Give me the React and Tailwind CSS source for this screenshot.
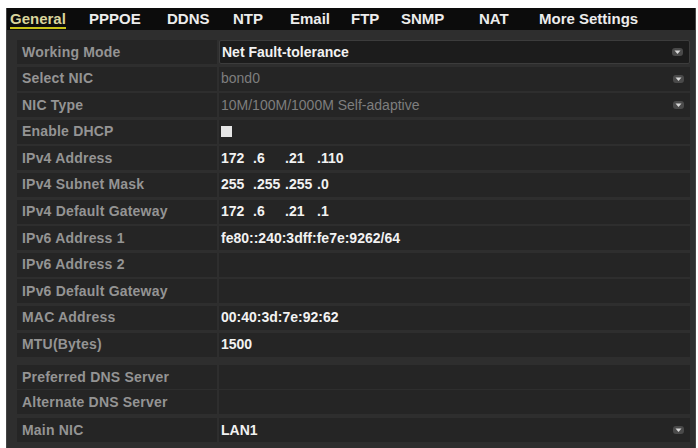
import React from 'react';

const tabs = [
  { name: 'General', w: 'w-[79px]', active: true },
  { name: 'PPPOE', w: 'w-[78px]' },
  { name: 'DDNS', w: 'w-[66px]' },
  { name: 'NTP', w: 'w-[57px]' },
  { name: 'Email', w: 'w-[61px]' },
  { name: 'FTP', w: 'w-[50px]' },
  { name: 'SNMP', w: 'w-[78px]' },
  { name: 'NAT', w: 'w-[60px]' },
  { name: 'More Settings', w: 'w-[110px]' },
];

const Arrow = () => (
  <svg width="11" height="8" viewBox="0 0 11 8" className="shrink-0">
    <rect x="0" y="0" width="11" height="8" rx="3" fill="#4a4a4a" />
    <path d="M2.5 2.5 L8.5 2.5 L5.5 6 Z" fill="#d8d8d8" />
  </svg>
);

const Ip = ({ parts }) => (
  <div className="flex">
    {parts.map((p, i) => (
      <span key={i} className="w-[32px]">{i > 0 ? '.' + p : p}</span>
    ))}
  </div>
);

const Row = ({ label, children, select, dark, dim }) => (
  <div className="flex h-[24px] gap-[2px]">
    <div className="w-[200px] shrink-0 bg-[#252525] pl-[5px] flex items-center text-[#949494] font-bold tracking-[0.2px]">
      {label}
    </div>
    <div
      className={
        'flex-1 flex items-center pl-[2px] pr-[6px] font-bold ' +
        (dark ? 'bg-[#1c1c1c] border border-[#3c3c3c] rounded-[2px] ' : 'bg-[#252525] ') +
        (dim ? 'text-[#7e7e7e] font-normal' : 'text-[#f2f2f2]')
      }
    >
      <div className="flex-1">{children}</div>
      {select && <Arrow />}
    </div>
  </div>
);

export default function App() {
  return (
    <div className="w-[698px] h-[448px] bg-white pt-[8px] pl-[6px] pr-[2px] overflow-hidden" style={{ fontFamily: '"Liberation Sans", Arial, sans-serif' }}>
      <div className="h-[440px] bg-[#2e2e2e] border-l border-r border-[#454545] flex flex-col">
        <div className="h-[22px] bg-[#0c0c0c] flex items-center pl-[3px] text-[15px] font-bold text-[#ececec]">
          {tabs.map((t) => (
            <div key={t.name} className={t.w + ' shrink-0'}>
              {t.active ? (
                <span className="text-[#d9d49c] border-b-2 border-[#c9c21a] leading-[17px] inline-block">{t.name}</span>
              ) : (
                <span className="leading-[17px] inline-block">{t.name}</span>
              )}
            </div>
          ))}
        </div>

        <div className="pl-[10px] pr-[5px] pt-[10px] text-[14px] flex flex-col">
          <div className="flex flex-col gap-[2.6px]">
            <Row label="Working Mode" select dark>Net Fault-tolerance</Row>
            <Row label="Select NIC" select dim>bond0</Row>
            <Row label="NIC Type" select dim>10M/100M/1000M Self-adaptive</Row>
            <Row label="Enable DHCP">
              <div className="w-[11px] h-[11px] bg-[#e6e6e6]" />
            </Row>
            <Row label="IPv4 Address"><Ip parts={['172', '6', '21', '110']} /></Row>
            <Row label="IPv4 Subnet Mask"><Ip parts={['255', '255', '255', '0']} /></Row>
            <Row label="IPv4 Default Gateway"><Ip parts={['172', '6', '21', '1']} /></Row>
            <Row label="IPv6 Address 1">fe80::240:3dff:fe7e:9262/64</Row>
            <Row label="IPv6 Address 2" />
            <Row label="IPv6 Default Gateway" />
            <Row label="MAC Address">00:40:3d:7e:92:62</Row>
            <Row label="MTU(Bytes)">1500</Row>
          </div>

          <div className="flex flex-col gap-[1px] mt-[8.5px]">
            <Row label="Preferred DNS Server" />
            <Row label="Alternate DNS Server" />
          </div>

          <div className="mt-[4px]">
            <Row label="Main NIC" select>LAN1</Row>
          </div>
        </div>
      </div>
    </div>
  );
}
